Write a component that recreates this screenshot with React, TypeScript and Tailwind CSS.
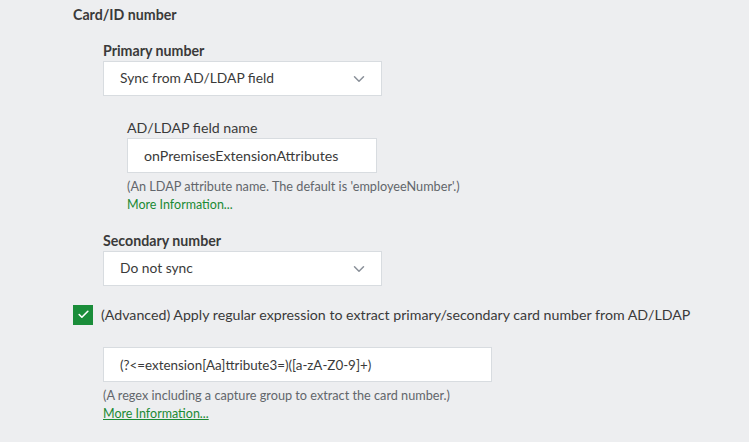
import { Check, ChevronDown } from "lucide-react";

const font = { fontFamily: "Lato, 'Liberation Sans', sans-serif" };

function Select({ value }: { value: string }) {
  return (
    <div className="flex h-[35px] w-[279px] items-center justify-between border border-[#d8dce0] bg-white pl-4 pr-[13px] text-[13.8px] text-[#3a3a3a]">
      <span>{value}</span>
      <ChevronDown size={18} strokeWidth={2} className="text-[#8a9099]" />
    </div>
  );
}

function Help({ text, underline }: { text: string; underline?: boolean }) {
  return (
    <div className="mt-[4px] text-[12.7px] leading-[18px]">
      <p className="text-[#62666b]">{text}</p>
      <a className={`text-[12.5px] text-[#1b8a34] ${underline ? "underline" : ""}`}>More Information...</a>
    </div>
  );
}

export default function App() {
  return (
    <div style={font} className="h-[442px] w-[749px] overflow-hidden bg-[#edeef0] pl-[73px] pt-[5px] text-[#3a3a3a]">
      <h3 className="text-[14.2px] font-bold leading-[20px]">Card/ID number</h3>

      <div className="ml-[30px] mt-[16px]">
        <label className="block text-[14.2px] font-bold leading-[20px]">Primary number</label>
        <Select value="Sync from AD/LDAP field" />

        <div className="ml-[24px] mt-[22px]">
          <label className="block text-[14.2px] leading-[20px]">AD/LDAP field name</label>
          <div className="flex h-[35px] w-[250px] items-center border border-[#d8dce0] bg-white px-4 text-[14.2px]">
            onPremisesExtensionAttributes
          </div>
          <Help text="(An LDAP attribute name. The default is 'employeeNumber'.)" />
        </div>

        <label className="mt-[17px] block text-[14.2px] font-bold leading-[20px]">Secondary number</label>
        <Select value="Do not sync" />
      </div>

      <div className="mt-[18px] flex items-center gap-[8px]">
        <span className="flex h-[20px] w-[20px] items-center justify-center bg-[#1a8d3a]">
          <Check size={13} strokeWidth={3} className="text-white" />
        </span>
        <span className="text-[14.2px]">
          (Advanced) Apply regular expression to extract primary/secondary card number from AD/LDAP
        </span>
      </div>

      <div className="ml-[30px] mt-[22px]">
        <div className="flex h-[35px] w-[389px] items-center border border-[#d8dce0] bg-white px-4 text-[13.4px]">
          (?&lt;=extension[Aa]ttribute3=)([a-zA-Z0-9]+)
        </div>
        <Help text="(A regex including a capture group to extract the card number.)" underline />
      </div>
    </div>
  );
}
